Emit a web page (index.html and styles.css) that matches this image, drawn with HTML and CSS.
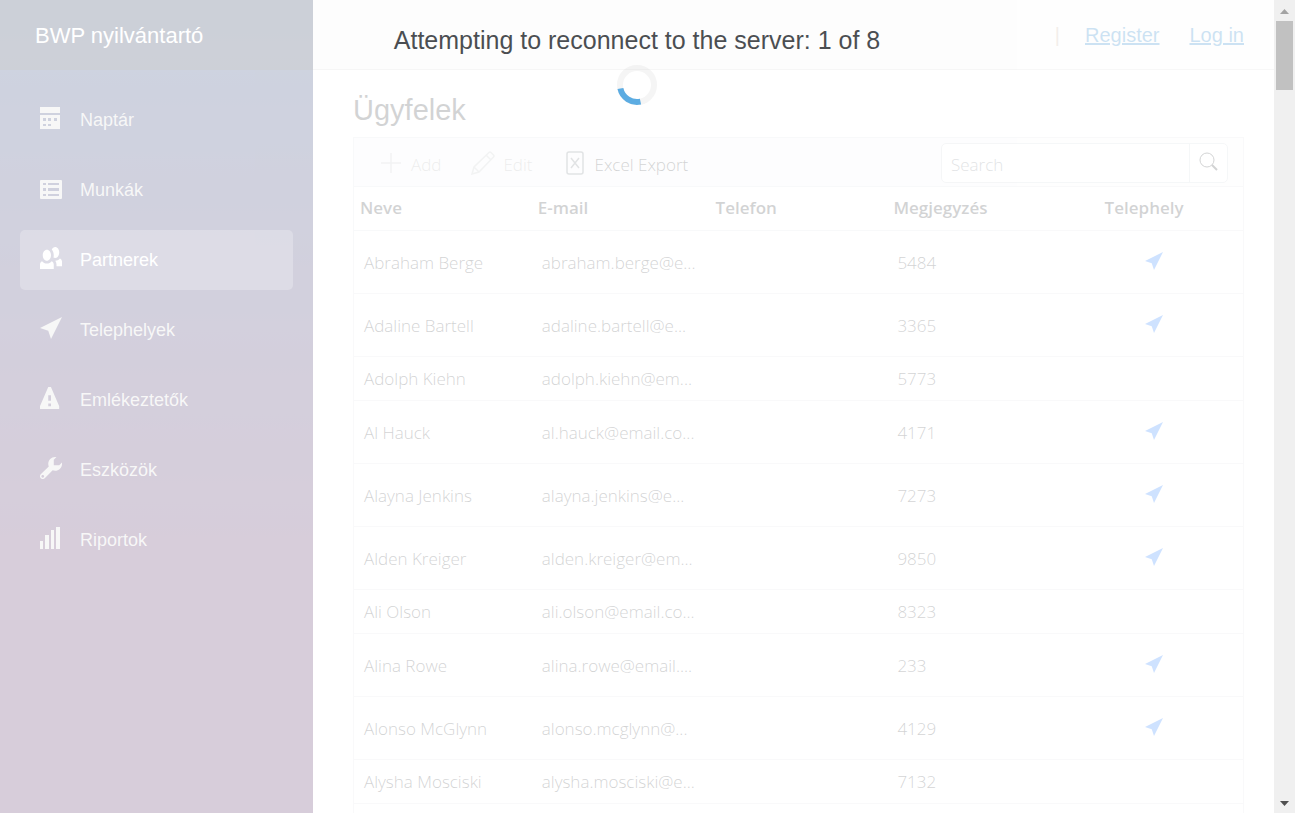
FILE: index.html
```
<!DOCTYPE html>
<html lang="hu">
<head>
<meta charset="utf-8">
<title>Ügyfelek - BWP nyilvántartó</title>
<link rel="stylesheet" href="styles.css">
</head>
<body>
<div class="window">
  <div class="app">
    <aside class="sidebar">
      <div class="brand-row"><a class="brand" href="#">BWP nyilvántartó</a></div>
      <nav class="nav">
        <a class="nav-link" href="#"><svg class="nav-icon" viewBox="0 0 22 22"><path fill-rule="evenodd" d="M0 0h20v6h-20zM0 8h20v14h-20zM3 11v3h3v-3zM8 11v3h3v-3zM14 11v3h3v-3zM3 17v2h3v-2zM8 17v2h3v-2z"/></svg>Naptár</a>
        <a class="nav-link" href="#"><svg class="nav-icon" viewBox="0 0 22 22"><path fill-rule="evenodd" d="M1 3h20q1 0 1 1v17q0 1-1 1h-20q-1 0-1-1v-17q0-1 1-1zM3 6v2h3v-2zM8 6v2h11v-2zM3 11v3h3v-3zM8 11v3h11v-3zM3 17v2h3v-2zM8 17v2h11v-2z"/></svg>Munkák</a>
        <a class="nav-link active" href="#"><svg class="nav-icon" viewBox="0 0 8 8"><path d="M5.500 0c-.51 0-.95.35-1.22.88.45.54.72 1.280.72 2.130 0 .29-.03.55-.09.81.19.11.38.19.59.19.83 0 1.500-.9 1.500-2s-.67-2-1.500-2zm-3 1c-.83 0-1.500.9-1.500 2s.67 2 1.500 2 1.500-.9 1.500-2-.67-2-1.500-2zm4.750 3.160c-.43.51-1.020.82-1.690.84.27.38.44.84.44 1.340v.66h2v-1.660c0-.52-.31-.97-.75-1.190zm-6.500 1c-.44.22-.75.67-.75 1.190v1.660h5v-1.660c0-.52-.31-.97-.75-1.190-.45.53-1.060.84-1.750.84s-1.300-.32-1.750-.84z"/></svg>Partnerek</a>
        <a class="nav-link" href="#"><svg class="nav-icon" viewBox="0 0 8 8"><path d="M8 0l-8 4 3 1 1 3 4-8z"/></svg>Telephelyek</a>
        <a class="nav-link" href="#"><svg class="nav-icon" viewBox="0 0 8 8"><path d="M3.090 0c-.06 0-.1.04-.13.09l-2.940 6.810c-.02.05-.03.13-.03.19v.81c0 .05.04.09.09.09h6.810c.05 0 .09-.04.09-.09v-.81c0-.05-.01-.14-.03-.19l-2.940-6.810c-.02-.05-.07-.09-.13-.09h-.81zm-.09 3h1v2h-1v-2zm0 3h1v1h-1v-1z"/></svg>Emlékeztetők</a>
        <a class="nav-link" href="#"><svg class="nav-icon" viewBox="0 0 8 8"><path d="M5.500 0c-1.380 0-2.500 1.120-2.500 2.500 0 .32.08.62.19.91l-2.910 2.880c-.39.39-.39 1.050 0 1.440.2.2.46.28.72.28.26 0 .52-.09.72-.28l2.880-2.910c.28.11.58.19.91.19 1.380 0 2.500-1.120 2.500-2.500 0-.16 0-.32-.03-.47l-.97.97h-2v-2l.97-.97c-.15-.03-.31-.03-.47-.03zm-4.500 6.500c.28 0 .5.22.5.5s-.22.5-.5.5-.5-.22-.5-.5.22-.5.5-.5z"/></svg>Eszközök</a>
        <a class="nav-link" href="#"><svg class="nav-icon" viewBox="0 0 22 22"><path d="M0 14h3v8h-3zM5 8h4v14h-4zM11 3h3v19h-3zM16 0h4v22h-4z"/></svg>Riportok</a>
      </nav>
    </aside>
    <main class="main">
      <header class="top-row"><span class="divider">|</span><a href="#">Register</a><a href="#">Log in</a></header>
      <section class="content">
        <h1 class="title">Ügyfelek</h1>
        <div class="grid">
          <div class="toolbar">
            <button class="tool" type="button" disabled><svg class="tool-icon" viewBox="0 0 24 24"><path d="M12 2v20M2 12h20"/></svg><span>Add</span></button>
            <button class="tool" type="button" disabled><svg class="tool-icon" viewBox="0 0 24 24"><path d="M1 23l2-7L18 1.500q1-1 2 0l2.500 2.500q1 1 0 2L8 21zM3 16l5 5M15 4l5 5"/></svg><span>Edit</span></button>
            <button class="tool" type="button"><svg class="tool-icon" viewBox="0 0 24 24"><rect x="4" y="1" width="16" height="22" rx="2"/><path d="M8 7l8 10M16 7l-8 10"/></svg><span>Excel Export</span></button>
            <div class="search">
              <input class="search-input" type="text" placeholder="Search" aria-label="Search">
              <button class="search-button" type="button" aria-label="Keresés"><svg class="search-icon" viewBox="0 0 20 20"><circle cx="8" cy="8" r="7"/><path d="M13 13l5 5"/></svg></button>
            </div>
          </div>
          <table class="table">
            <thead><tr><th>Neve</th><th>E-mail</th><th>Telefon</th><th>Megjegyzés</th><th class="place">Telephely</th></tr></thead>
            <tbody>
              <tr class="tall"><td>Abraham Berge</td><td>abraham.berge@e...</td><td></td><td>5484</td><td class="place"><a href="#" aria-label="Telephely"><svg class="pin" viewBox="0 0 8 8"><path d="M8 0l-8 4 3 1 1 3 4-8z"/></svg></a></td></tr>
              <tr class="tall"><td>Adaline Bartell</td><td>adaline.bartell@e...</td><td></td><td>3365</td><td class="place"><a href="#" aria-label="Telephely"><svg class="pin" viewBox="0 0 8 8"><path d="M8 0l-8 4 3 1 1 3 4-8z"/></svg></a></td></tr>
              <tr><td>Adolph Kiehn</td><td>adolph.kiehn@em...</td><td></td><td>5773</td><td></td></tr>
              <tr class="tall"><td>Al Hauck</td><td>al.hauck@email.co...</td><td></td><td>4171</td><td class="place"><a href="#" aria-label="Telephely"><svg class="pin" viewBox="0 0 8 8"><path d="M8 0l-8 4 3 1 1 3 4-8z"/></svg></a></td></tr>
              <tr class="tall"><td>Alayna Jenkins</td><td>alayna.jenkins@e...</td><td></td><td>7273</td><td class="place"><a href="#" aria-label="Telephely"><svg class="pin" viewBox="0 0 8 8"><path d="M8 0l-8 4 3 1 1 3 4-8z"/></svg></a></td></tr>
              <tr class="tall"><td>Alden Kreiger</td><td>alden.kreiger@em...</td><td></td><td>9850</td><td class="place"><a href="#" aria-label="Telephely"><svg class="pin" viewBox="0 0 8 8"><path d="M8 0l-8 4 3 1 1 3 4-8z"/></svg></a></td></tr>
              <tr><td>Ali Olson</td><td>ali.olson@email.co...</td><td></td><td>8323</td><td></td></tr>
              <tr class="tall"><td>Alina Rowe</td><td>alina.rowe@email....</td><td></td><td>233</td><td class="place"><a href="#" aria-label="Telephely"><svg class="pin" viewBox="0 0 8 8"><path d="M8 0l-8 4 3 1 1 3 4-8z"/></svg></a></td></tr>
              <tr class="tall"><td>Alonso McGlynn</td><td>alonso.mcglynn@...</td><td></td><td>4129</td><td class="place"><a href="#" aria-label="Telephely"><svg class="pin" viewBox="0 0 8 8"><path d="M8 0l-8 4 3 1 1 3 4-8z"/></svg></a></td></tr>
              <tr><td>Alysha Mosciski</td><td>alysha.mosciski@e...</td><td></td><td>7132</td><td></td></tr>
              <tr><td></td><td></td><td></td><td></td><td></td></tr>
            </tbody>
          </table>
        </div>
      </section>
    </main>
    <div class="reconnect" role="status">
      <p class="reconnect-text">Attempting to reconnect to the server: 1 of 8</p>
      <svg class="spinner" viewBox="0 0 40 40"><circle cx="20" cy="20" r="17"/><path d="M3.400 23.500A17 17 0 0 0 23.500 36.600"/></svg>
    </div>
  </div>
  <div class="scrollbar" aria-hidden="true">
    <svg class="arrow" viewBox="0 0 21 21"><path class="up" d="M6 14h9l-4.500-5z"/></svg>
    <div class="thumb"></div>
    <svg class="arrow" viewBox="0 0 21 21"><path class="down" d="M6 9h9l-4.500 5z"/></svg>
  </div>
</div>
</body>
</html>
```
FILE: styles.css
```
* { box-sizing: border-box; }

body {
  margin: 0;
  color: #212529;
  background: #fff;
  font: 20px/30px "Liberation Sans", Arial, sans-serif;
}

.window { display: flex; height: 100vh; overflow: hidden; }
.app { position: relative; display: flex; flex: 1; min-width: 0; overflow: hidden; }

/* Sidebar */
.sidebar {
  flex: 0 0 313px;
  background: linear-gradient(180deg, rgb(5, 39, 103) 0%, #3a0647 70%);
}
.brand-row {
  display: flex;
  align-items: center;
  height: 70px;
  padding: 2px 35px 0;
  background: rgba(0, 0, 0, .4);
}
.brand { color: #fff; font-size: 22px; text-decoration: none; }
.nav { display: flex; flex-direction: column; gap: 10px; padding: 20px; }
.nav-link {
  display: flex;
  align-items: center;
  gap: 18px;
  height: 60px;
  padding: 0 20px;
  border-radius: 5px;
  color: #d7d7d7;
  font-size: 18px;
  text-decoration: none;
}
.nav-link.active { color: #fff; background: rgba(255, 255, 255, .25); }
.nav-icon { width: 22px; height: 22px; margin-bottom: 4px; fill: currentColor; }

/* Main column */
.main { flex: 1; min-width: 0; }
.top-row {
  display: flex;
  align-items: center;
  justify-content: flex-end;
  gap: 30px;
  height: 70px;
  padding: 0 30px 0 40px;
  border-bottom: 1px solid #d6d5d5;
  background: #f7f7f7;
}
.top-row a { color: #0071c1; }
.divider { margin-right: -5px; color: #c0aa94; }
.content { padding: 22px 30px 0 40px; }
.title { margin: 0 0 9px; font-size: 29px; font-weight: 400; line-height: 36px; }

/* Data grid */
.grid {
  border: 1px solid #dee2e6;
  font-family: "Open Sans", "Noto Sans", sans-serif;
  font-size: 17px;
}
.toolbar {
  display: flex;
  align-items: center;
  height: 49px;
  padding: 2px 15px 0;
  border-bottom: 1px solid #dee2e6;
  background: #f8f9fa;
}
.tool {
  display: flex;
  align-items: center;
  gap: 8px;
  padding: 0 10px;
  margin-right: 10px;
  border: 0;
  background: none;
  color: #212529;
  font: inherit;
  font-weight: 350;
}
.tool span { padding-top: 4px; }
.tool:disabled { opacity: .4; }
.tool-icon { width: 24px; height: 24px; fill: none; stroke: #6c757d; stroke-width: 1.5; }
.search {
  display: flex;
  width: 287px;
  height: 40px;
  margin-left: auto;
  border: 1px solid #ced4da;
  border-radius: 5px;
  background: #fff;
  overflow: hidden;
}
.search-input {
  flex: 1;
  min-width: 0;
  padding: 4px 9px 0;
  border: 0;
  outline: 0;
  color: #212529;
  background: none;
  font: inherit;
  font-weight: 350;
}
.search-input::placeholder { color: #6c757d; opacity: 1; }
.search-button {
  display: flex;
  align-items: center;
  justify-content: center;
  width: 38px;
  padding: 0 0 2px;
  border: 0;
  border-left: 1px solid #ced4da;
  background: none;
}
.search-icon { width: 20px; height: 20px; fill: none; stroke: #212529; stroke-width: 1; }
.search-icon path { stroke-width: 2; }

.table { width: 100%; border-collapse: collapse; table-layout: fixed; }
.table tr { height: 44px; border-bottom: 1px solid #dee2e6; }
.table tr.tall { height: 63px; }
.table thead tr { height: 43px; }
.table th { padding: 0 6px; font-weight: 600; text-align: left; }
.table td { padding: 2px 10px 0; font-weight: 350; line-height: 26px; white-space: nowrap; }
.table .place { text-align: center; }
.table th.place { padding-right: 26px; }
.pin { width: 18px; height: 18px; margin-bottom: 6px; vertical-align: middle; fill: #0d6efd; }

/* Connection overlay */
.reconnect {
  position: absolute;
  inset: 0;
  display: flex;
  flex-direction: column;
  align-items: center;
  padding-top: 25px;
  background: #fff;
  opacity: .8;
}
.reconnect-text { margin: 0 0 10px; font-size: 25px; line-height: 30px; }
.spinner { width: 40px; height: 40px; fill: none; stroke: #f3f3f3; stroke-width: 6; }
.spinner path { stroke: #3498db; }

/* Scroll bar */
.scrollbar { display: flex; flex-direction: column; flex: 0 0 21px; background: #f0f0f0; }
.arrow { width: 21px; height: 21px; }
.arrow:last-child { margin-top: auto; }
.up { fill: #a3a3a3; }
.down { fill: #505050; }
.thumb { height: 69px; margin: 0 2px; background: #c1c1c1; }
```
